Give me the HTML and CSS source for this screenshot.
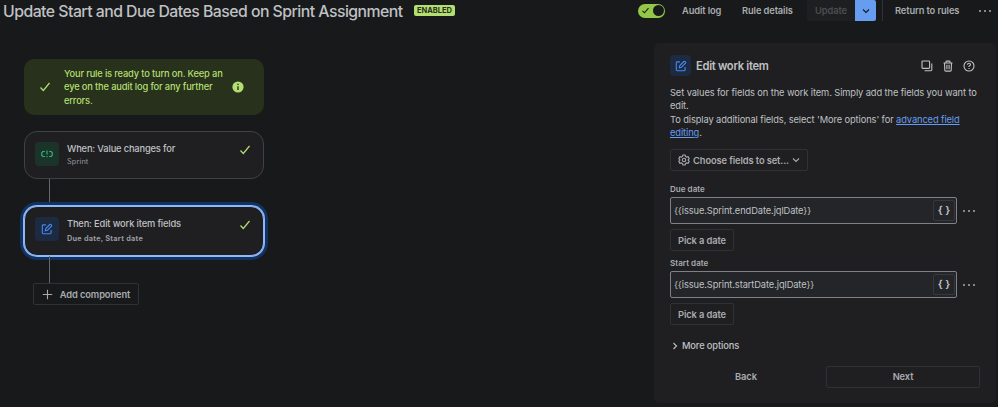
FILE: index.html
```html
<!DOCTYPE html>
<html lang="en">
<head>
  <meta charset="UTF-8">
  <title>Update Start and Due Dates Based on Sprint Assignment</title>
  <link rel="stylesheet" href="styles.css">
</head>
<body>
  <header class="topbar">
    <h1>Update Start and Due Dates Based on Sprint Assignment</h1>
    <span class="badge">ENABLED</span>
    <div class="actions">
      <span class="toggle">
        <svg width="9" height="9" viewBox="0 0 9 9"><path d="M1.5 4.8l2 2 4-4.6"/></svg>
        <span class="knob"></span>
      </span>
      <a class="audit">Audit log</a>
      <a class="details">Rule details</a>
      <div class="split">
        <span class="update">Update</span>
        <span class="arrow"><svg width="8" height="8" viewBox="0 0 8 8"><path d="M1 2.5l3 3 3-3"/></svg></span>
      </div>
      <span class="divider"></span>
      <a class="return">Return to rules</a>
      <span class="dots"><i></i><i></i><i></i></span>
    </div>
  </header>

  <main>
    <section class="canvas">
      <div class="banner">
        <svg class="check" width="12" height="12" viewBox="0 0 12 12"><path d="M1.5 6.5l2.8 3L10.500 2"/></svg>
        <p>Your rule is ready to turn on. Keep an<br>eye on the audit log for any further<br>errors.</p>
        <svg class="info" width="12" height="12" viewBox="0 0 12 12"><circle cx="6" cy="6" r="5.6"/><path d="M6 5.2V9M6 2.7v1.3"/></svg>
      </div>

      <div class="card trigger">
        <span class="tile green">
          <svg width="12" height="8" viewBox="0 0 12 8"><path d="M3.8 1.5H1.9l-1.1 1v3l1.1 1h1.9M8.2 1.5h1.9l1.1 1v3l-1.1 1H8.2M6 .6v3.800M6 5.900v1.300"/></svg>
        </span>
        <div class="text">
          <h3>When: Value changes for</h3>
          <p>Sprint</p>
        </div>
        <svg class="check" width="12" height="12" viewBox="0 0 12 12"><path d="M1.5 6.5l2.8 3L10.500 2"/></svg>
      </div>
      <div class="line"></div>
      <div class="card action">
        <span class="tile blue">
          <svg width="12" height="12" viewBox="0 0 12 12"><path d="M5 1.9H2.2q-.9 0-.9.9v7q0 .9.9.9h7q.9 0 .9-.9V7M4.3 7.7l.5-2.2 4-4q.6-.5 1.2 0l.5.5q.5.6 0 1.2l-4 4z"/></svg>
        </span>
        <div class="text">
          <h3>Then: Edit work item fields</h3>
          <p>Due date, Start date</p>
        </div>
        <svg class="check" width="12" height="12" viewBox="0 0 12 12"><path d="M1.5 6.5l2.8 3L10.500 2"/></svg>
      </div>
      <div class="line"></div>
      <button class="btn add"><svg width="11" height="11" viewBox="0 0 11 11"><path d="M5.5 .8v9.4M.8 5.5h9.4"/></svg>Add component</button>
    </section>

    <aside class="panel">
      <div class="panel-head">
        <span class="tile blue small">
          <svg width="12" height="12" viewBox="0 0 12 12"><path d="M5 1.9H2.2q-.9 0-.9.9v7q0 .9.9.9h7q.9 0 .9-.9V7M4.3 7.7l.5-2.2 4-4q.6-.5 1.2 0l.5.5q.5.6 0 1.2l-4 4z"/></svg>
        </span>
        <h2>Edit work item</h2>
        <div class="tools">
          <svg width="12" height="12" viewBox="0 0 12 12"><rect x="1" y="1" width="7.6" height="7.4" rx=".8"/><path d="M10.8 3.6v6.2q0 .9-.9.9H3.6"/></svg>
          <svg width="12" height="12" viewBox="0 0 12 12"><path d="M1.5 3h9M4 2.8v-1q0-.7.7-.7h2.6q.7 0 .7.7v1M2.5 3.2l.3 7q0 .9.9.9h4.6q.9 0 .9-.9l.3-7M4.9 4.8v4.4M7.1 4.8v4.4"/></svg>
          <svg width="12" height="12" viewBox="0 0 12 12"><circle cx="6" cy="6" r="5"/><path d="M4.5 4.8q0-1.5 1.5-1.5t1.5 1.3Q7.5 5.500 6 6.200v.8M6 8v1.100"/></svg>
        </div>
      </div>

      <p class="desc">Set values for fields on the work item. Simply add the fields you want to<br>edit.<br>To display additional fields, select 'More options' for <a>advanced field</a><br><a>editing</a>.</p>

      <button class="btn choose">
        <svg width="12" height="12" viewBox="0 0 12 12"><path d="M4.9 1h2.2l.4 1.5 1.1.6 1.5-.4 1.1 1.900-1.100 1.400 1.100 1.400-1.100 1.900-1.500-.4-1.100.6-.4 1.500H4.900l-.4-1.500-1.100-.6-1.500.4L.8 7.400 1.900 6 .8 4.600l1.100-1.900 1.500.4 1.100-.6z"/><circle cx="6" cy="6" r="1.7"/></svg>
        <span>Choose fields to set...</span>
        <svg width="8" height="8" viewBox="0 0 8 8"><path d="M1 2.5l3 3 3-3"/></svg>
      </button>

      <label>Due date</label>
      <div class="field">
        <div class="input"><span>{{issue.Sprint.endDate.jqlDate}}</span><span class="braces">{ }</span></div>
        <span class="dots"><i></i><i></i><i></i></span>
      </div>
      <button class="btn pick">Pick a date</button>

      <label>Start date</label>
      <div class="field">
        <div class="input"><span>{{issue.Sprint.startDate.jqlDate}}</span><span class="braces">{ }</span></div>
        <span class="dots"><i></i><i></i><i></i></span>
      </div>
      <button class="btn pick">Pick a date</button>

      <div class="more"><svg width="8" height="8" viewBox="0 0 8 8"><path d="M2.5 1l3 3-3 3"/></svg><span>More options</span></div>

      <div class="footer">
        <span class="back">Back</span>
        <button class="btn next">Next</button>
      </div>
    </aside>
  </main>
</body>
</html>
```

FILE: styles.css
```css
* { box-sizing: border-box; }
body { margin: 0; height: 407px; overflow: hidden; background: #18191a; color: #bfc1c4; font-family: Inter, sans-serif; font-size: 9.3px; line-height: 13.33px; }
h1, h2, h3, p { margin: 0; }
svg { display: block; flex: none; fill: none; stroke: currentColor; stroke-width: 1.1; }

.topbar { display: flex; align-items: center; height: 21px; padding-left: 3px; white-space: nowrap; }
h1 { width: 411px; font-size: 15.8px; font-weight: 500; line-height: 20px; padding-top: 2px; letter-spacing: -0.52px; }
.badge { width: 41px; height: 11px; border-radius: 2px; background: #b3df72; color: #28311b; font-size: 7.5px; font-weight: 700; line-height: 11px; text-align: center; }
.actions { display: flex; align-items: center; height: 21px; margin-left: 183px; font-weight: 600; letter-spacing: -0.1px; }
.toggle { display: flex; align-items: center; justify-content: space-between; width: 27px; height: 14px; padding: 0 1px 0 3px; border-radius: 7px; background: #94c748; color: #18191a; }
.knob { width: 11px; height: 11px; border-radius: 50%; background: #18191a; }
.audit, .details, .return { color: #a9abaf; }
.audit { width: 60px; margin-left: 17px; }
.details { width: 65px; }
.split { display: flex; height: 21px; }
.update { width: 48px; background: #1e1f21; color: #4b4d51; text-align: center; line-height: 21px; }
.arrow { display: flex; align-items: center; justify-content: center; width: 21px; border-radius: 0 2px 2px 0; background: #669df1; color: #18191a; }
.divider { width: 1px; height: 21px; margin-left: 6px; background: #303134; }
.return { width: 84px; margin-left: 12px; }
.dots { display: flex; gap: 3px; }
.dots i { width: 2px; height: 2px; border-radius: 1px; background: #a9abaf; }

main { display: flex; justify-content: space-between; padding: 22px 2px 0 24px; }
.canvas { width: 240px; padding-top: 16px; }
.banner { display: flex; align-items: center; height: 56px; margin-bottom: 16px; padding: 0 20px 0 15px; border-radius: 10px; background: #28311b; color: #b3df72; font-weight: 500; letter-spacing: -0.15px; white-space: nowrap; }
.banner p { width: 168px; margin-left: 13px; }
.info { fill: #b3df72; stroke: none; }
.info path { stroke: #28311b; stroke-width: 1.4; }
.check { color: #b3df72; stroke-width: 1.2; }
.card { display: flex; height: 48px; padding: 10px 12px 0 10px; border: 1px solid #414246; border-radius: 13px; background: #1f1f21; }
.card .text { flex: 1; margin-left: 8px; }
.card .check { margin-top: 2px; }
h3 { font-size: 9.3px; font-weight: 500; letter-spacing: -0.15px; }
.card p { font-size: 7.3px; line-height: 13px; color: #96999e; letter-spacing: 0.15px; }
.action { height: 50px; border-color: #8fb8f6; box-shadow: 0 0 0 1px #8fb8f6, 0 0 0 4px #123263; }
.action .text p { margin-top: 2px; font-weight: 700; letter-spacing: 0.27px; }
.tile { display: flex; align-items: center; justify-content: center; width: 24px; height: 24px; border-radius: 4px; }
.green { background: #1c3329; color: #2abb7f; }
.blue { background: #1c2b42; color: #4688ec; }
.small { width: 21px; height: 21px; }
.line { width: 1px; height: 27px; margin-left: 25px; background: #63666b; }

.btn { display: flex; align-items: center; justify-content: center; height: 22px; padding: 0; border: 1px solid #303134; border-radius: 2px; background: none; color: #a9abaf; font: 600 9.3px/13px Inter, sans-serif; letter-spacing: -0.1px; white-space: nowrap; }
.add { width: 106px; margin-left: 9px; gap: 7px; }

.panel { width: 342px; height: 360px; padding: 12px 16px 0; border-radius: 5px; background: #1f1f21; }
.panel-head { display: flex; align-items: center; height: 21px; }
h2 { margin-left: 5px; padding-top: 2px; font-size: 11.2px; font-weight: 600; letter-spacing: -0.3px; }
.tools { display: flex; gap: 9px; margin-left: auto; padding-right: 5px; }
.desc { margin-top: 10px; letter-spacing: -0.1px; white-space: nowrap; }
.desc a { color: #669df1; text-decoration: underline; }
.choose { width: 138px; margin-top: 10px; gap: 3px; }
label { display: block; height: 13px; margin-top: 11px; font-size: 8px; font-weight: 600; line-height: 14px; color: #a9abaf; letter-spacing: 0.05px; }
.field { display: flex; align-items: center; gap: 6px; margin-top: 2px; }
.input { display: flex; align-items: center; justify-content: space-between; width: 287px; height: 27px; padding: 0 1px 0 3px; border: 1px solid #7e8188; border-radius: 2px; background: #242528; letter-spacing: -0.1px; }
.braces { width: 22px; height: 21px; border: 1px solid #37383c; border-radius: 2px; text-align: center; font-size: 11px; font-weight: 600; line-height: 18px; }
.pick { width: 64px; margin-top: 5px; }
.pick + label { margin-top: 5px; }
.more { display: flex; align-items: center; gap: 3px; margin: 14px 0 13px 1px; font-weight: 500; letter-spacing: -0.12px; }
.footer { display: flex; align-items: center; gap: 4px; }
.back { width: 152px; text-align: center; font-weight: 600; color: #a9abaf; }
.next { width: 154px; }
```
